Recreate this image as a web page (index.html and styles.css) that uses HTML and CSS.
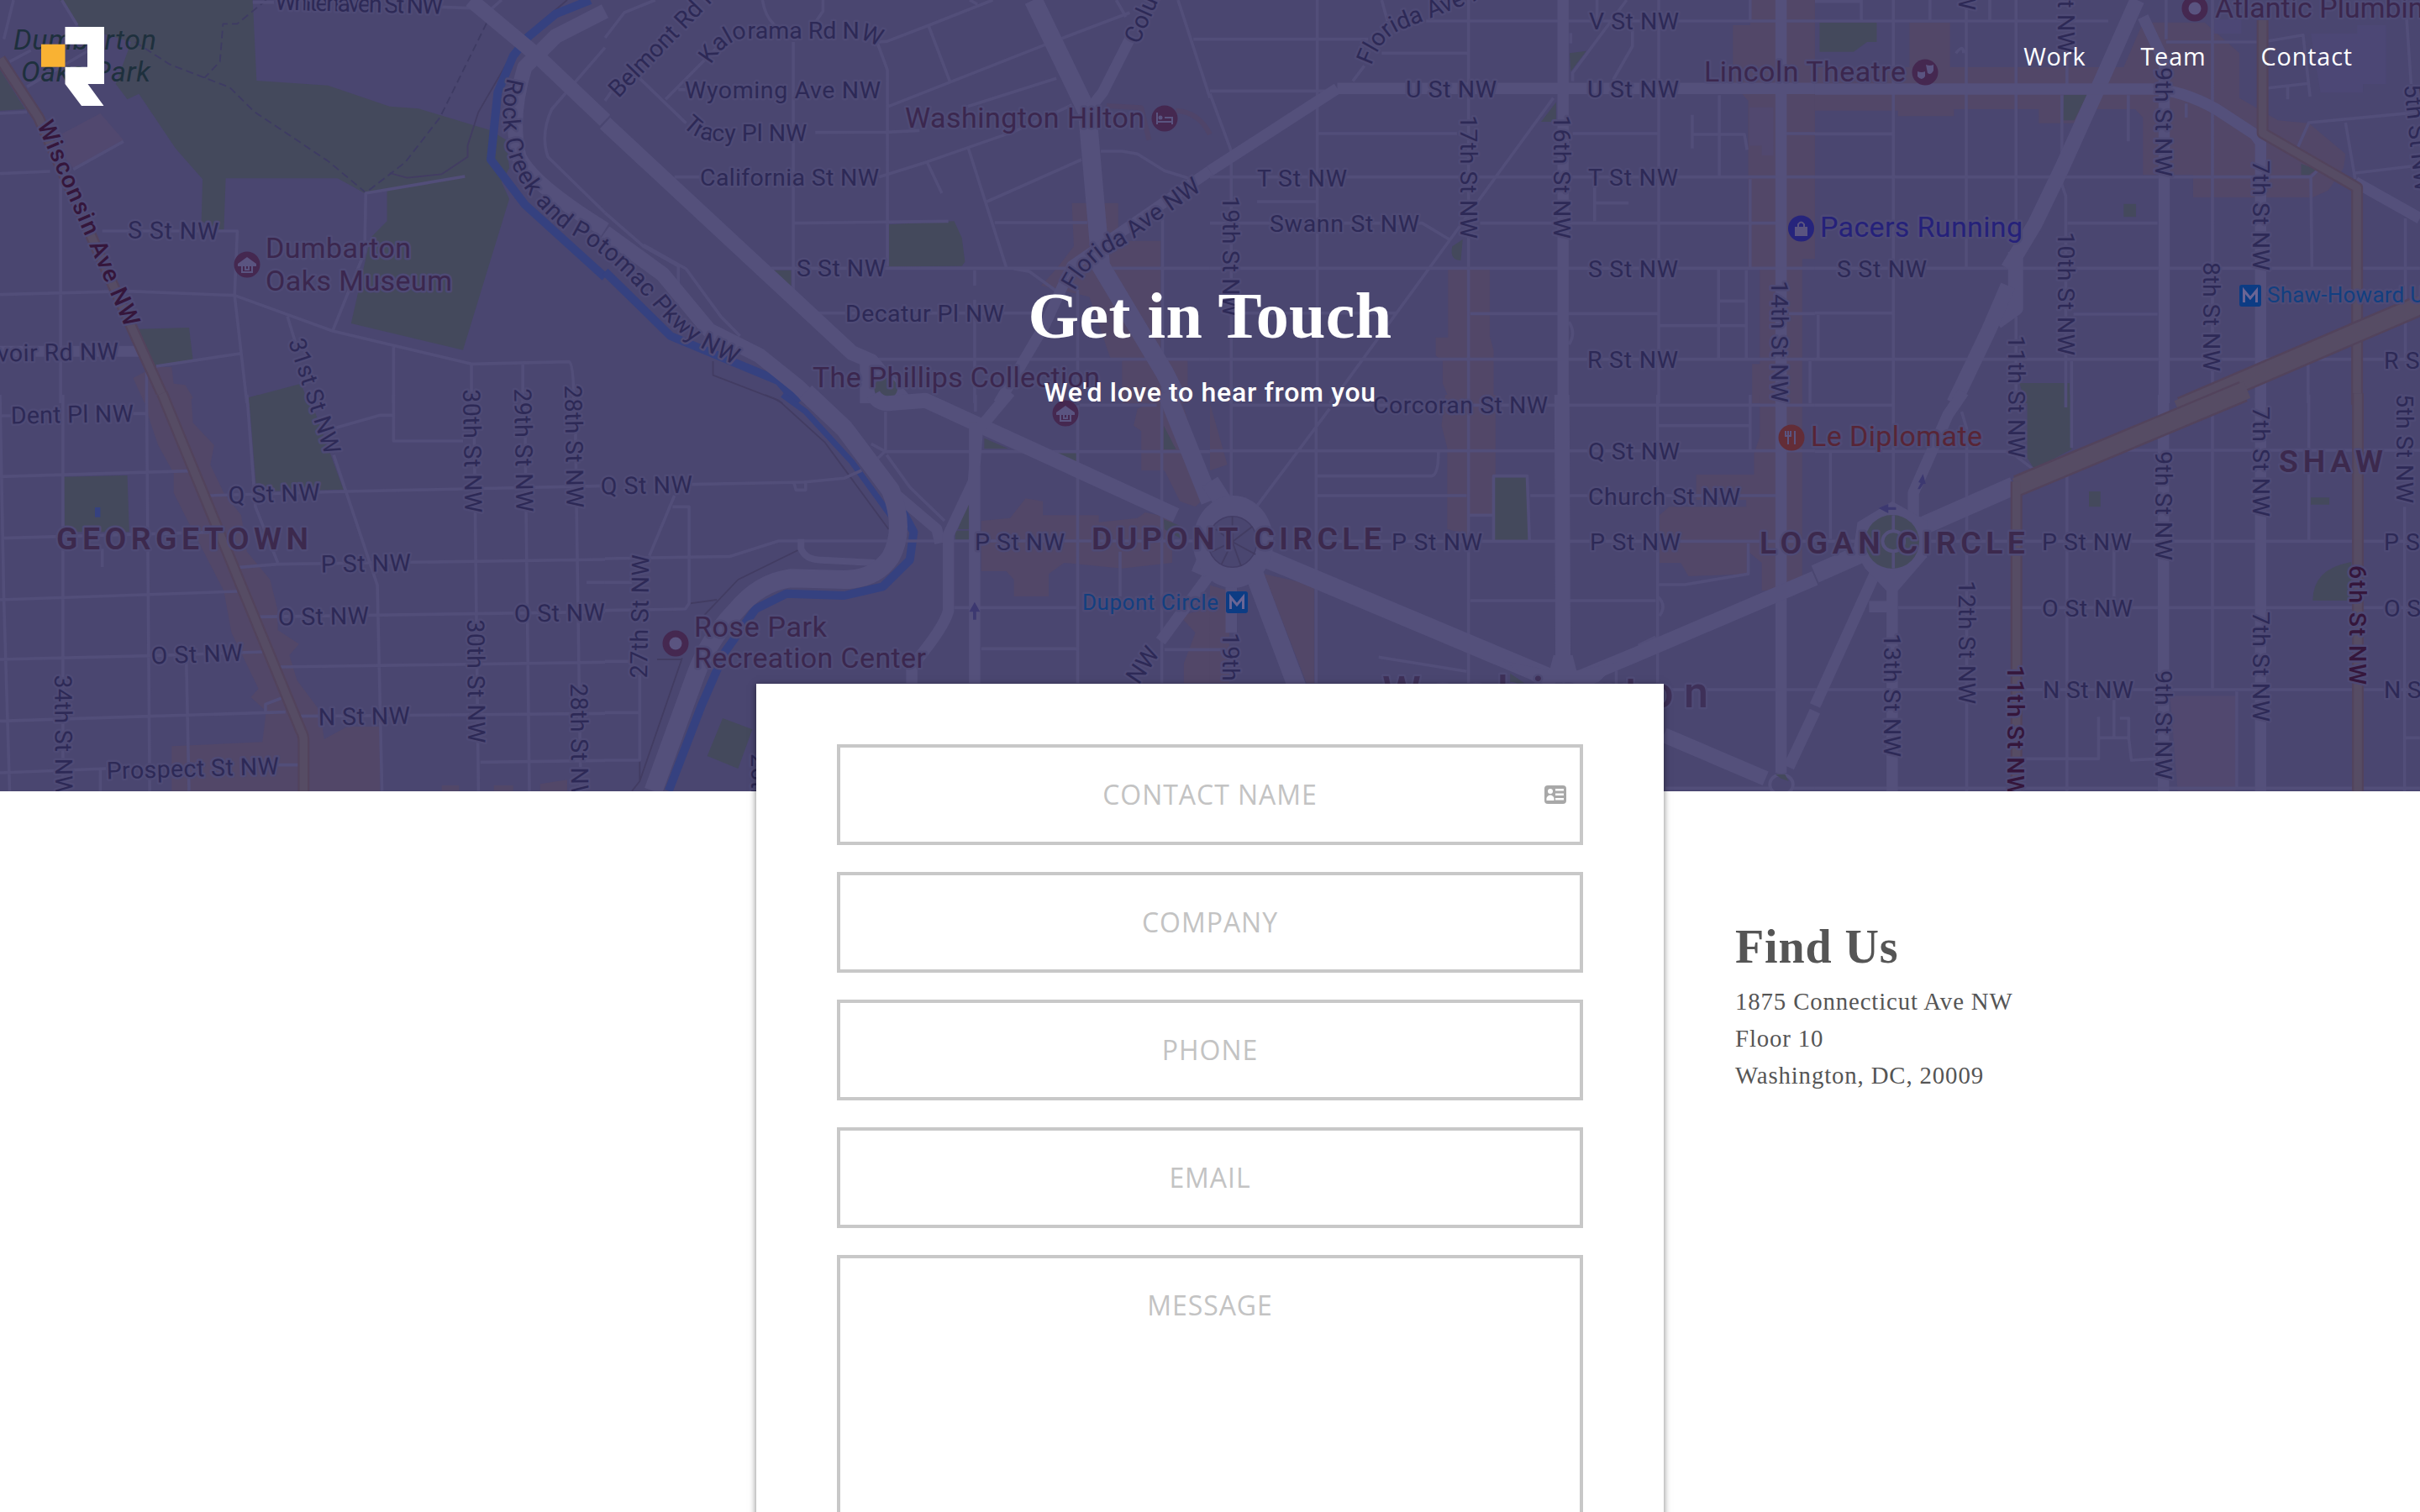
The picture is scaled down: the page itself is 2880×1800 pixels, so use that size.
FILE: index.html
```html
<!DOCTYPE html>
<html lang="en">
<head>
<meta charset="utf-8">
<title>Contact</title>
<link rel="stylesheet" href="styles.css">
</head>
<body>
<header class="hero">
<svg class="map" viewBox="0 0 2880 942" aria-hidden="true">
<defs>
<path id="parkway" d="M604,93 Q594,130 602,170 Q608,211 645,250 Q665,272 690,285 Q721,305 746,330 L778,365 Q801,394 837,416 L882,439"/>
<path id="kalorama" d="M846,78 Q862,50 885,46 L1022,46 L1045,55"/>
<path id="tracy" d="M812,150 Q828,168 850,168 L975,168"/>
<path id="florida1" d="M1279,347 Q1293,319 1318,302 Q1348,288 1365,272 L1440,220"/>
<path id="florida2" d="M1632,79 Q1643,47 1665,37 L1703,22 L1790,-12"/>
</defs>

<!-- Georgetown north -->
<g transform="scale(.45918,.33333)">
<path class="park" d="M155,0H655L665,288 850,305 1010,380 1085,388 1270,465 1312,500 1320,600 1300,650 1320,710 1200,1250 910,1155 960,850 1003,790V680L945,690 875,637H585L580,830 522,790 525,640 455,530 360,335 330,355 300,300 340,150 205,95zM0,250L65,390 0,395zM360,1175L490,1170 500,1285 400,1308zM645,1420L780,1370 800,1440H645z"/>
<path class="campus" d="M130,500L260,405 320,500 190,600z"/>
<path class="shops" d="M345,1350L400,1310H445L450,1370 480,1375 500,1420 490,1440H375z"/>
<path class="trail" d="M1470,0L1350,140 1240,400 1212,520V560L1145,622 1055,635 1010,618"/>
<path class="trail dash" d="M690,0L615,85H578L570,220 530,278M350,150L440,230 595,312 660,400 850,575 948,688 1050,580 1140,420 1262,80"/>
<path class="water" d="M1530,0L1440,50 1370,130 1330,200 1290,330 1272,570 1360,730 1568,990"/>
<path class="street" d="M0,405L70,400M0,620L130,612M190,605L320,505M157,600V1440M265,825H615L608,1055 640,1440M0,1052L330,1040 608,1055 862,1182 1222,1300 1475,1292Q1487,1300 1487,1440M862,1182L945,900 948,690 1205,630M1020,1240V1440M1222,1300V1440M1355,1297V1440M745,1130L765,1220M405,1308L625,1262M380,1330V1440M35,0L10,140M160,0L200,90M25,220L80,180M70,310L230,180M655,8H710M1145,25L1235,30M1568,170L1430,390Q1400,480 1420,560L1568,760M1300,0L1275,30"/>
<path class="road" d="M0,1255H360"/>
<path class="road w18" d="M1220,0L1385,190 1568,430M1568,40L1440,130 1360,240Q1320,420 1345,560Q1380,660 1568,820"/>
<path class="hwy-edge" d="M0,210L100,420 345,1180 432,1445"/><path class="hwy" d="M0,210L100,420 345,1180 432,1445"/>
</g>

<!-- Kalorama -->
<g transform="translate(720) scale(.45918,.33333)">
<path class="park" d="M735,802L905,790 925,850 933,935 925,950 735,952zM432,965H482V1030z"/>
<path class="shops" d="M1210,725H1330V860H1440V1280H1510V1440H1340V1280H1310L1255,1060 1130,1020 1170,960 1215,880z"/>
<path class="trail" d="M280,1290V1340L440,1425 460,1440"/>
<path class="drive" d="M1300,378L1390,385 1410,500M1480,395Q1540,400 1568,480"/>
<path class="water" d="M0,970L170,1200 450,1360 500,1440"/>
<path class="street" d="M488,150V1050M705,150L732,250V950M490,797L890,790M430,958H1568M550,1118H1130M640,1283H1568M180,632H250M710,632L835,578 1060,470 1210,375M545,473L730,472 815,466M735,380L1140,160 1360,45M700,150L730,148 840,90 1005,0M838,90L895,295M940,380L1170,280M940,522L1040,955M835,580L873,690M990,720L1235,570M1010,795H1250M1285,540H1340L1380,550 1450,610 1520,640M90,280L210,440M157,355L290,170M190,320H215M408,0Q415,60 440,90M565,0V40L545,80M0,135L50,45 130,0M0,360L20,320M945,0L965,15M958,965V1020M958,1070V1440M1060,960L1100,970 1190,1060M1325,0L1350,60M1485,0L1568,350M1525,140H1568M1445,760V1440M1225,1035V1440M0,760L100,880 190,950V1040M100,875L210,960 300,1130 350,1200"/>
<path class="road w18" d="M0,440L640,1260 690,1290 780,1440M680,1280V1440"/>
<path class="road w18" d="M0,830L150,980 270,1180 400,1270 500,1380 545,1440"/>
<path class="road w22" d="M1110,0L1250,400 1285,950 1450,1330 1490,1440"/>
<path class="road" d="M1360,140L1290,330 1250,400M1568,610L1210,950 1140,1160 1020,1440"/>
<ellipse class="park" cx="728" cy="1387" rx="30" ry="38"/>
</g>

<!-- U Street -->
<g transform="translate(1440) scale(.45918,.33333)">
<path class="shops" d="M1400,0H1568V925H1535V1440H1405V1300H1425V960H1395V360L1355,300V90H1400zM617,960H725V1200L735,1250V1440H625L603,1370V1290L585,1270V1205H617z"/>
<path class="campus" d="M1398,383H1460V555H1430V520H1398z"/>
<path class="park" d="M932,190L975,182 935,255zM897,365V435H858zM655,855L650,930Q620,930 628,880z"/>
<path class="street" d="M0,140H410M278,0V1440M0,325H300M560,75H1568M445,190H668M670,0V1440M278,477H640M940,477H1160M0,632H1568M122,720H275M0,797H550L620,855M700,797H1470M0,958H1568M85,1118H485M675,1120H1160M0,1283H1568M1163,0V1440M1320,340V630M1250,410V530M1250,480H1385L1392,535M1490,477H1568M997,660V790M997,725H1085M1318,960V1280M1390,965V1280M1163,1163H1390M1318,1075H1390M1500,1120H1568M1400,0V70M890,350L350,1370 310,1440M1080,0L940,260V290M1095,110V165L1045,285M1003,0V75M445,0L460,75M400,235L370,290M0,335L55,540V1440M1555,1290V1440M1400,640V960M930,1150Q950,1190 930,1230M935,118V155"/>
<path class="road w14" d="M915,0V1440M1480,0V1440M330,316H1568M0,610L330,316"/>
</g>

<!-- Shaw -->
<g transform="translate(2160) scale(.45918,.33333)">
<path class="shops" d="M0,240H245V80H350V240H800L850,80H1010L1100,190V350L1200,430 1280,440 1375,550 1370,600 1330,680 1290,705H980V625H850V420L830,390H700V440H580V390H360V415H215V395H0z"/>
<path class="building" d="M1285,120H1405V90H1480V300H1420V330H1310zM1035,70H1105V120H1035z"/>
<path class="park" d="M12,80H160V150H135L100,185H12zM645,338H705L672,430H642zM800,728H832V775H800zM1260,585L1300,605 1280,625H1260zM530,1368H660V1440H545z"/>
<path class="street" d="M0,75H760M203,0V1440M392,0V958M521,0V900M521,1130V1440M120,0V70M298,0V70M453,0V70M0,5H120M653,190V300M640,340V660L650,700V1440M812,340V505M655,797H888M0,632H1285L1305,605M1285,632L1288,960M0,478H200M0,958H1568M0,1118H200M670,1122H888M0,1283H1568M910,0V140M910,150H1145M1030,0V1400M962,370V420M1170,148L1265,125 1283,345M1170,315L1280,298M1225,310V355M1568,400L1280,438 1250,530M1375,438L1400,640M1400,618L1568,590M1530,0L1545,300M1530,780V1290M1278,1300V1440M8,1125V1280M665,1290V1440M365,190Q385,155 385,190"/>
<path class="road w18" d="M835,0L735,310 640,600 570,800 500,960M520,900V1100L470,1150"/>
<path class="road w18" d="M500,1020L450,1180 360,1440"/>
<path class="road w14" d="M0,318H870Q950,320 1040,390L1140,480 1155,510V1440M850,60L905,220V1440M1400,650L1568,780"/>
<path class="hwy-edge" d="M1160,72V475L1405,670V1445"/><path class="hwy" d="M1160,72V475L1405,670V1445"/>
<path class="hwy-edge wide" d="M1568,1090L950,1455"/><path class="hwy wide" d="M1580,1083L940,1461"/>
</g>

<!-- Georgetown -->
<g transform="translate(0 470) scale(.45918,.33333)">
<path class="shops" d="M370,0H495L500,100 555,180 545,250 580,350 625,430 640,560 700,660 720,770V840L775,890 750,930 770,1020 830,1130 840,1230 900,1185H985V1415H445V1255L680,1240 690,1130 650,1080 670,1050 600,850 580,700 490,460 450,350V280L410,180 390,100zM1145,1415V1395H1190V1415zM1280,1415V1395H1330V1415zM1400,1415V1390L1470,1375V1415z"/>
<path class="park" d="M165,293L330,288 335,490H168zM645,10L670,0H800L890,338 665,345z"/>
<path class="pool" d="M246,402H260V437H246z"/>
<path class="street" d="M163,0V1415M380,0L388,1415M0,75H30M345,67H378M0,292L490,272M5,512L560,490M0,0L10,730 25,1415M540,360L900,345 1568,325M640,0L662,400 720,600M865,215L978,680 990,1415M865,120L985,73H1020M1020,0V165H1200M615,617L720,605 1568,588M0,732L615,702M668,793L1568,775M0,945L390,932 680,918M723,972L1568,955M0,1165L390,1148 740,1133M770,1148L1568,1138M688,1133V1105L730,1083M483,955L490,1415M0,1350L275,1335M720,1322H775M1228,0L1240,1415M1360,0L1372,1415M1490,0L1505,1415M1245,1312L1568,1306M265,550V615M1520,670H1568M260,1340V1415"/>
<path class="hwy-edge" d="M420,-5L780,1200Q787,1215 787,1240V1415"/><path class="hwy" d="M420,-5L780,1200Q787,1215 787,1240V1415"/>
</g>

<!-- Rock Creek -->
<g transform="translate(720 470) scale(.45918,.33333)">
<path class="shops" d="M975,450L1050,440 1090,370 1135,380V430H1280V455L1380,440 1400,420 1470,440V600L1340,620 1190,600 1150,640V720H1060V660L1040,630H975zM1380,50L1450,0H1490L1568,350 1530,400 1490,380 1450,270H1390V130L1370,110zM1490,790L1568,760V1030H1500V960L1530,850z"/>
<path class="park" d="M983,155L1045,192H983zM1140,203H1223V250zM1448,110L1480,195H1448zM943,360V480H915zM908,485H943V520H908zM1448,445L1495,470 1500,520 1450,480zM305,1155L382,1195 345,1335 265,1290z"/>
<path class="trail" d="M415,0L450,20 570,170 735,480M500,555L345,660 255,790M220,745L290,732M200,940L90,1380 70,1415M90,1300V1380M135,945H200"/>
<path class="water thin" d="M460,0L520,60 640,240 745,440"/>
<path class="water" d="M765,400L800,490 790,590 720,685 620,717 470,710 390,765 310,920 250,1110 165,1415"/>
<path class="street" d="M225,320L515,312 620,298 665,270M490,315L495,340H520V315M180,360L115,575M175,400H218V745L208,765 0,770M0,585L325,577 450,522H1568M0,670H70M727,60V200L690,250M690,175L727,203H1568M730,215L790,330 880,450M960,0V60M1230,37H1430M1225,37V1030M1443,0V1030M905,760H1225M975,907H1225M1450,910H1568M1335,560V720M0,952H70M0,1135H90M90,1000V1305H0"/>
<path class="road" d="M740,340L860,480 868,530"/>
<path class="road w8" d="M508,515V550Q520,590 560,590L700,600"/>
<path class="road w22" d="M520,-10L620,120 740,340Q780,480 740,580Q700,660 620,660L480,655Q400,670 340,770Q270,870 235,1000L125,1415"/>
<path class="road w18" d="M695,0Q710,35 740,30L830,20 1480,430"/>
<path class="road w14" d="M1050,-10L965,130 955,310 890,500V770Q880,830 795,970V1030M958,100V1030"/>
<path class="road w22" d="M1455,-10L1568,380"/>
<path class="road w14" d="M1568,640L1440,880"/>
<path class="arrow" d="M958,740L972,775H962V803H954V775H944z"/>
</g>

<!-- Dupont Circle -->
<g transform="translate(1440 470) scale(.45918,.33333)">
<path class="shops" d="M610,0H740V430H672V500L615,480V190L600,110zM1425,0H1535V690L1430,700V600L1395,560V640L1240,648 1220,600H1165V430L1190,400H1390V375H1260V285H1410V210L1425,150zM140,640L270,680V1030H250zM0,680L50,700V1030H0zM0,30L45,250 0,270z"/>
<path class="park" d="M738,295H822L828,520H738zM778,995L815,1030H778z"/>
<path class="street" d="M55,37H1568M0,200H1568M275,0V1030M55,0V360M310,50L120,400M278,290H575Q592,285 592,205M278,360H665M830,360H1470M670,0V1030M735,520V290H822L828,520M735,430H672M280,523H1568M675,735H1155M1160,0V1050M1163,110H1400M1400,0V195M1163,678H1230L1395,640V530M1110,895L1155,865M437,937L665,988M1053,985V1040M1180,1053H1568M1180,1405H1568M0,910H30M1160,720Q1185,750 1165,790"/>
<path class="road w22" d="M0,310L60,440M120,570L880,1010M115,640L230,1060"/>
<path class="road w18" d="M912,0L915,1000M-5,560L-30,640"/>
<path class="road w14" d="M55,680V850M1480,0V1350M1500,1330L1568,1130"/>
<path class="road w18" d="M1568,655L1100,930 960,1010M1176,1215L1440,1370"/>
<path class="junction" d="M760,950L880,985 890,930 940,930 950,985 1060,955 1000,1035H850z"/>
<ellipse class="junction" cx="60" cy="525" rx="104" ry="165"/>
<ellipse class="ground ringed" cx="58" cy="525" rx="63" ry="91"/>
<path class="trail" d="M58,525L58,435M58,525L110,470M58,525L118,570M58,525L80,610M58,525L30,605M58,525L5,560M58,525L15,480"/>
<ellipse class="ground ring-road" cx="1481" cy="1392" rx="30" ry="36"/>
<path class="park" d="M1465,1355H1490L1500,1380 1480,1370z"/>
</g>

<!-- Logan Circle -->
<g transform="translate(2160 470) scale(.45918,.33333)">
<path class="park" d="M550,0H665V195L568,265 550,225zM710,345H740V400H710zM1285,367H1333V392H1285zM1390,597Q1290,620 1290,735H1390z"/>
<path class="campus" d="M920,1075H1090V1415H940z"/>
<path class="street" d="M0,37H200M0,202H520M780,198H1568M203,0V400M380,60L393,120V1415M0,523H1568M215,760H1568M0,1053H1568M0,1405H1568M653,280V1415M1030,45V1053M1280,0V523M1528,400V1415M775,530V720M775,1090V1225M735,1150V1300H545M735,1225H813V1155H790M813,1225L820,1305 885,1300M1093,1060V1405M665,0V190M650,0V45M40,205V515M522,220L565,265M1530,1225H1568"/>
<path class="road w14" d="M385,-10L345,70 255,350V450M200,640V1415M903,0V1415M1155,0V1415M140,757H200M155,640L0,1110"/>
<path class="road w22" d="M260,480L515,325M0,640L140,555"/>
<path class="junction" d="M110,455L200,380 290,450 290,580 215,700H185L130,620 100,550z"/>
<ellipse class="park" cx="200" cy="525" rx="70" ry="96"/>
<path class="street" d="M203,430V620"/>
<ellipse class="park ring-road" cx="203" cy="523" rx="28" ry="36"/>
<path class="arrow" d="M165,405L190,390V401H210V411H190V423zM280,283L287,318H281L272,337H266L274,315 268,312z"/>
<path class="hwy-edge wide" d="M1110,-12L525,325"/><path class="hwy-edge" d="M522,310V1415M1407,-5V1415"/>
<path class="hwy wide" d="M1120,-18L520,328"/><path class="hwy" d="M522,310V1415M1407,-5V1415"/>
</g>

<!-- street labels -->
<g class="st">
<text x="327" y="12" textLength="200" transform="rotate(1.5 327 12)">Whitehaven St NW</text>
<text x="152" y="284" textLength="108" transform="rotate(1 152 284)">S St NW</text>
<text x="-3" y="431" textLength="144" transform="rotate(-1 0 431)">voir Rd NW</text>
<text transform="translate(343 407) rotate(72)" textLength="143">31st St NW</text>
<text transform="translate(551 464) rotate(89)" textLength="147">30th St NW</text>
<text transform="translate(612 463) rotate(89)" textLength="147">29th St NW</text>
<text transform="translate(672 459) rotate(89)" textLength="146">28th St NW</text>
<text transform="translate(736 118) rotate(-46)">Belmont Rd NW</text>
<text><textPath href="#kalorama">Kalorama Rd NW</textPath></text>
<text x="815" y="117" textLength="233">Wyoming Ave NW</text>
<text><textPath href="#tracy">Tracy Pl NW</textPath></text>
<text x="833" y="221" textLength="213">California St NW</text>
<text x="948" y="329" textLength="106">S St NW</text>
<text x="1006" y="383" textLength="189">Decatur Pl NW</text>
<text><textPath href="#florida1" textLength="196">Florida Ave NW</textPath></text>
<text><textPath href="#florida2">Florida Ave NW</textPath></text>
<text><textPath href="#parkway" textLength="466">Rock Creek and Potomac Pkwy NW</textPath></text>
<text transform="translate(1355 54) rotate(-66)">Columbia Rd</text>
<text x="1673" y="116" textLength="108">U St NW</text>
<text x="1889" y="116" textLength="109">U St NW</text>
<text x="1891" y="35" textLength="107">V St NW</text>
<text x="1496" y="222" textLength="107">T St NW</text>
<text x="1890" y="221" textLength="107">T St NW</text>
<text x="1511" y="276" textLength="178">Swann St NW</text>
<text x="1890" y="330" textLength="107">S St NW</text>
<text x="1889" y="438" textLength="108">R St NW</text>
<text x="1634" y="492" textLength="208">Corcoran St NW</text>
<text x="1890" y="547" textLength="109">Q St NW</text>
<text x="1890" y="601" textLength="181">Church St NW</text>
<text x="1892" y="655" textLength="108">P St NW</text>
<text x="1656" y="655" textLength="108">P St NW</text>
<text x="1160" y="655" textLength="107">P St NW</text>
<text x="2186" y="330" textLength="107">S St NW</text>
<text x="2430" y="655" textLength="107">P St NW</text>
<text x="2430" y="734" textLength="108">O St NW</text>
<text x="2431" y="831" textLength="108">N St NW</text>
<text x="2837" y="439" textLength="107">R St NW</text>
<text x="2837" y="655" textLength="107">P St NW</text>
<text x="2837" y="734" textLength="107">O St NW</text>
<text x="2837" y="831" textLength="107">N St NW</text>
<text transform="translate(1737 137) rotate(90)" textLength="147">17th St NW</text>
<text transform="translate(1848 137) rotate(90)" textLength="147">16th St NW</text>
<text transform="translate(1454 233) rotate(90)" textLength="144">19th St NW</text>
<text transform="translate(1454 753) rotate(90)" textLength="145">19th St NW</text>
<text transform="translate(2107 334) rotate(90)" textLength="145">14th St NW</text>
<text transform="translate(2448 -66) rotate(90)" textLength="129">9th St NW</text>
<text transform="translate(2330 -133) rotate(90)" textLength="145">12th St NW</text>
<text transform="translate(1557 -137) rotate(72)" textLength="145">18th St NW</text>
<text transform="translate(2564 80) rotate(90)" textLength="130">9th St NW</text>
<text transform="translate(2564 537) rotate(90)" textLength="130">9th St NW</text>
<text transform="translate(2564 798) rotate(90)" textLength="130">9th St NW</text>
<text transform="translate(2448 276) rotate(90)" textLength="147">10th St NW</text>
<text transform="translate(2680 191) rotate(90)" textLength="131">7th St NW</text>
<text transform="translate(2680 484) rotate(90)" textLength="131">7th St NW</text>
<text transform="translate(2680 728) rotate(90)" textLength="131">7th St NW</text>
<text transform="translate(2621 312) rotate(90)" textLength="130">8th St NW</text>
<text transform="translate(2389 399) rotate(90)" textLength="146">11th St NW</text>
<text transform="translate(2861 102) rotate(84)" textLength="128">5th St NW</text>
<text transform="translate(2851 469) rotate(90)" textLength="130">5th St NW</text>
<text transform="translate(2330 691) rotate(90)" textLength="147">12th St NW</text>
<text transform="translate(2241 754) rotate(90)" textLength="147">13th St NW</text>
<text x="13" y="505" textLength="146" transform="rotate(-1 13 505)">Dent Pl NW</text>
<text x="272" y="600" textLength="109" transform="rotate(-2 272 600)">Q St NW</text>
<text x="382" y="682" textLength="107" transform="rotate(-1 382 682)">P St NW</text>
<text x="331" y="745" textLength="108" transform="rotate(-1 331 745)">O St NW</text>
<text x="180" y="791" textLength="109" transform="rotate(-2 180 791)">O St NW</text>
<text x="612" y="741" textLength="108" transform="rotate(-1 612 741)">O St NW</text>
<text x="379" y="864" textLength="109" transform="rotate(-1 379 864)">N St NW</text>
<text x="127" y="928" textLength="205" transform="rotate(-1.6 127 928)">Prospect St NW</text>
<text x="715" y="589" textLength="109" transform="rotate(-1 715 589)">Q St NW</text>
<text transform="translate(65 804) rotate(89.5)" textLength="145">34th St NW</text>
<text transform="translate(556 738) rotate(89.5)" textLength="147">30th St NW</text>
<text transform="translate(679 814) rotate(89.5)" textLength="146">28th St NW</text>
<text transform="translate(770 808) rotate(-89)" textLength="147">27th St NW</text>
<text transform="translate(893 897) rotate(90)" textLength="145">26th St NW</text>
<text transform="translate(1325 861) rotate(-56)">Ave NW</text>
</g>
<g class="st major">
<text transform="translate(44 149) rotate(66.5)" textLength="264">Wisconsin Ave NW</text>
<text transform="translate(2388 792) rotate(90)" textLength="156">11th St NW</text>
<text transform="translate(2795 673) rotate(90)" textLength="142">6th St NW</text>
</g>

<!-- districts -->
<g class="area">
<text x="67" y="654" textLength="300">GEORGETOWN</text>
<text x="1299" y="654" textLength="345">DUPONT CIRCLE</text>
<text x="2094" y="659" textLength="316">LOGAN CIRCLE</text>
<text x="2712" y="562" textLength="124">SHAW</text>
<text class="city" x="1645" y="842" textLength="388">Washington</text>
</g>

<!-- places -->
<g class="poi">
<text class="green" x="16" y="59" textLength="170">Dumbarton</text>
<text class="green" x="25" y="97" textLength="154">Oaks Park</text>
<text x="316" y="307" textLength="173">Dumbarton</text>
<text x="316" y="346" textLength="222">Oaks Museum</text>
<text x="1077" y="152" textLength="285">Washington Hilton</text>
<text x="967" y="461" textLength="342">The Phillips Collection</text>
<text x="826" y="758" textLength="158">Rose Park</text>
<text x="826" y="795" textLength="276">Recreation Center</text>
<text x="2028" y="97" textLength="240">Lincoln Theatre</text>
<text x="2636" y="21">Atlantic Plumbing</text>
<text class="blue" x="2166" y="282" textLength="241">Pacers Running</text>
<text class="red" x="2155" y="531" textLength="204">Le Diplomate</text>
<text class="metro" x="1288" y="726" textLength="162">Dupont Circle</text>
<text class="metro" x="2698" y="360" textLength="187">Shaw-Howard U</text>
</g>
<g class="pin">
<circle cx="294" cy="315" r="15.5"/><circle cx="1386" cy="141" r="15.5"/><circle cx="1268" cy="492" r="15.5"/><circle cx="804" cy="766" r="15.5"/><circle cx="2291" cy="86" r="15.5"/><circle cx="2612" cy="10" r="15.5"/>
<circle class="blue" cx="2143.500" cy="272" r="15.500"/><circle class="red" cx="2132" cy="521" r="15.500"/>
<rect class="metro" x="1459" y="704" width="26" height="26" rx="3"/><rect class="metro" x="2665" y="339" width="26" height="26" rx="3"/>
</g>
<g class="glyph">
<circle cx="804" cy="766" r="7.500"/><circle cx="2612" cy="10" r="7.500"/>
<g id="museum"><path d="M283,314l11,-8 11,8v3h-22z"/><path class="line" d="M288,316v8h12v-8M292,317v4h4v-4"/></g>
<use href="#museum" x="974" y="177"/>
<path class="line" d="M1377,134v14M1377,145h18v3M1395,145v-5h-9"/><circle cx="1381" cy="140" r="2.500"/>
<path d="M2282,85q5,2 9,0v6q-4,6 -9,0zM2292,77q5,2 9,0v7q-3,6 -7,3z"/>
<path d="M2136,270h15v11h-15z"/><path class="line" d="M2140,270v-3q3.500,-5 7,0v3"/>
<path class="line" d="M2128,513v16M2125,513v6h6v-6M2136,529v-16"/>
<path class="line m" d="M1464.500,725v-14l7.500,9 7.500,-9v14M2670.500,360v-14l7.500,9 7.500,-9v14"/>
</g>
</svg>
<div class="topbar">
<a class="logo" href="#" aria-label="Home"><svg viewBox="0 0 75 94" width="75" height="94"><path fill="#f9b233" d="M0,20.700H28.500V47.700H0z"/><path fill="#fff" fill-rule="evenodd" d="M28.500,0H75V68H55.500L74.500,94H48L28.500,68V47.700H55V20.700H28.500z"/></svg></a>
<nav class="nav"><a href="#">Work</a><a href="#">Team</a><a href="#">Contact</a></nav>
</div>
<h1 class="title">Get in Touch</h1>
<p class="subtitle">We'd love to hear from you</p>
</header>
<main class="content">
<form class="card">
<div class="field"><input class="box" type="text" placeholder="CONTACT NAME"><svg class="autofill" viewBox="0 0 26 22" width="26" height="22"><rect width="26" height="22" rx="4" fill="#a8a8a8"/><circle cx="7" cy="7" r="3" fill="#fff"/><path fill="#fff" d="M2.500,18v-3q1.500,-3.500 4.500,-3.500t4.500,3.500v3zM13,4h10v2.500H13zM13,9.500h10v2.500H13zM13,15h10v2.500H13z"/></svg></div>
<input class="box" type="text" placeholder="COMPANY">
<input class="box" type="text" placeholder="PHONE">
<input class="box" type="text" placeholder="EMAIL">
<textarea class="box message" placeholder="MESSAGE"></textarea>
</form>
<aside class="find">
<h2 class="find-title">Find Us</h2>
<p class="address">1875 Connecticut Ave NW<br>Floor 10<br>Washington, DC, 20009</p>
</aside>
</main>
</body>
</html>
```
FILE: styles.css
```css
* { box-sizing: border-box; }
html, body { margin: 0; height: 1800px; overflow: hidden; background: #fff; }
body { font-family: "Liberation Serif", serif; color: #555; }

.hero { position: relative; height: 942px; background: #4a4670; color: #fff; text-align: center; overflow: hidden; }
.topbar { position: relative; display: flex; justify-content: space-between; height: 330px; padding: 32px 80px 0 49px; }
.logo { display: block; width: 75px; height: 94px; }
.nav { display: flex; gap: 65px; padding-top: 15px; font: 500 28.8px/40px "Open Sans", sans-serif; letter-spacing: 0.86px; }
.nav a { color: #fff; text-decoration: none; }
.title { position: relative; margin: 0; font-size: 78px; line-height: 92px; letter-spacing: 0.3px; }
.subtitle { position: relative; margin: 24px 0 0; font: 500 32px/42px Roboto, sans-serif; letter-spacing: 0.7px; }

/* Map drawn behind the header */
.map { position: absolute; left: 0; top: 0; width: 2880px; height: 942px; }
.map path, .map ellipse { vector-effect: non-scaling-stroke; }
.street, .road, .trail, .drive, .water, .hwy, .hwy-edge { fill: none; stroke-linejoin: round; }
.street { stroke: #524e79; stroke-width: 3.6; }
.road { stroke: #54507b; stroke-width: 13; }
.road.w8 { stroke-width: 8; }
.road.w14 { stroke-width: 13.5; }
.road.w18 { stroke-width: 18; }
.road.w22 { stroke-width: 22; }
.junction { fill: #54507b; }
.ground { fill: #4a4670; }
.ringed { stroke: #433d66; stroke-width: 1.5; }
.ring-road { stroke: #54507b; stroke-width: 4; }
.park { fill: #44495c; }
.campus { fill: #51486f; }
.building { fill: #4c4775; }
.shops { fill: #524768; }
.pool { fill: #354180; }
.water { stroke: #354180; stroke-width: 10; }
.water.thin { stroke-width: 7; }
.trail { stroke: #423c62; stroke-width: 1.8; }
.trail.dash { stroke: #3e3b63; stroke-dasharray: 9 5; }
.drive { stroke: #4f4469; stroke-width: 6; }
.hwy-edge { stroke: #52435c; stroke-width: 14; }
.hwy { stroke: #564c64; stroke-width: 9.5; }
.hwy-edge.wide { stroke-width: 26; }
.hwy.wide { stroke-width: 21; }
.arrow { fill: #3c3870; }

.map text { font-family: Roboto, sans-serif; paint-order: stroke; stroke: #4e4a75; stroke-width: 5px; stroke-linejoin: round; }
.st text { font-size: 28.500px; fill: #2d2956; translate: 0 -0.5px; }
.st text[transform$="rotate(90)"] { translate: 1.3px 0; }
.st.major text { fill: #35163b; font-weight: 500; }
.area text { font-size: 37.5px; font-weight: 600; fill: #3c294d; }
.area text.city { font-size: 52px; font-weight: 500; fill: #3e3058; }
.poi text { font-size: 34px; fill: #3b274e; }
.poi .green { fill: #1e303d; font-style: italic; stroke: none; }
.poi .blue { fill: #25217a; }
.poi .red { fill: #582536; }
.poi .metro { fill: #123f80; font-size: 26px; }
.pin { fill: #452850; }
.pin .blue { fill: #26247c; }
.pin .red { fill: #632d37; }
.pin .metro { fill: #0c3c84; }
.glyph { fill: #5a5480; }
.glyph .line { fill: none; stroke: #5a5480; stroke-width: 2; }
.glyph .m { stroke-width: 3; stroke: #6a6595; }

.content { display: grid; grid-template-columns: 1080px 1fr; column-gap: 85px; padding-left: 900px; align-items: start; }
.card { position: relative; display: flex; flex-direction: column; gap: 32px; height: 1400px; margin-top: -128px; padding: 72px 96px; background: #fff; box-shadow: 0 2px 8px rgba(0, 0, 0, .5); }
.field { position: relative; display: flex; }
.box { display: block; width: 100%; height: 120px; margin: 0; padding: 0 40px 2px; border: 4px solid #c8c8c8; border-radius: 0; outline: 0; background: #fff; color: #555; text-align: center; font: 32px/44px "Open Sans", sans-serif; letter-spacing: 0.96px; }
.box::placeholder { color: #c3c3c3; opacity: 1; }
.message { height: 500px; padding-top: 34px; resize: none; }
.autofill { position: absolute; right: 20px; top: 49px; }
.find { padding-top: 153px; letter-spacing: 0.87px; }
.find-title { margin: 0; font-size: 56px; line-height: 64px; }
.address { margin: 11px 0 0; font-size: 28.8px; line-height: 44px; }
```
